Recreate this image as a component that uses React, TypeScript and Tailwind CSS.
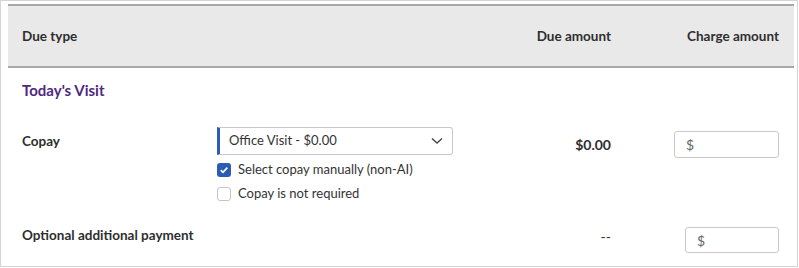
const font = { fontFamily: "Lato, 'Open Sans', sans-serif" };

const Chevron = () => (
  <svg width="12" height="8" viewBox="0 0 12 8" fill="none">
    <polyline points="1,1.5 6,6 11,1.5" stroke="#444" strokeWidth="1.4" />
  </svg>
);

const Check = () => (
  <svg width="10" height="10" viewBox="0 0 10 10" fill="none">
    <polyline points="1.8,5.2 4,7.3 8.3,2.6" stroke="#fff" strokeWidth="1.6" />
  </svg>
);

const Checkbox = ({ checked, label }: { checked?: boolean; label: string }) => (
  <div className="flex h-[20px] items-center">
    {checked ? (
      <span className="flex h-[14px] w-[14px] items-center justify-center rounded-[3px] bg-[#2b5bb3]">
        <Check />
      </span>
    ) : (
      <span className="h-[14px] w-[14px] rounded-[3px] border border-[#c4c4c4] bg-white" />
    )}
    <span className="ml-[7px] text-[13px] text-[#333]">{label}</span>
  </div>
);

const MoneyInput = ({ w, h }: { w: string; h: string }) => (
  <div className={`flex items-center rounded-[3px] border border-[#c9c9c9] bg-white pl-[11px] text-[14px] text-[#666] ${w} ${h}`}>
    $
  </div>
);

export default function App() {
  return (
    <div className="h-[268px] w-[799px] bg-white" style={font}>
      <div className="h-[267px] w-[798px] border border-[#d4d4d4] pl-[7px] pr-[3px] pt-[3px]">
        <div className="grid h-[64px] grid-cols-[195px_236px_158px_168px] items-center border-y-2 border-[#a8a8a8] bg-[#e9e9e9] px-[14px] text-[13.5px] font-bold text-[#2e2e2e]">
          <div>Due type</div>
          <div />
          <div className="text-right">Due amount</div>
          <div className="text-right">Charge amount</div>
        </div>

        <div className="px-[14px]">
          <div className="mt-[12px] text-[15px] leading-[20px] font-bold text-[#51287f]">Today's Visit</div>

          <div className="mt-[27px] grid grid-cols-[195px_236px_158px_168px] items-start">
            <div className="text-[13.5px] leading-[28px] font-bold text-[#2e2e2e]">Copay</div>
            <div>
              <div className="flex h-[28px] items-center justify-between rounded-r-[3px] border border-l-[3px] border-[#c9c9c9] border-l-[#2b5bb3] pl-[9px] pr-[9px] text-[13px] text-[#333]">
                <span>Office Visit - $0.00</span>
                <Chevron />
              </div>
              <div className="mt-[5px] flex flex-col gap-[4px]">
                <Checkbox checked label="Select copay manually (non-AI)" />
                <Checkbox label="Copay is not required" />
              </div>
            </div>
            <div className="mt-[8px] text-right text-[14px] leading-[20px] font-bold text-[#2e2e2e]">$0.00</div>
            <div className="mt-[4px] flex justify-end">
              <MoneyInput w="w-[105px]" h="h-[27px]" />
            </div>
          </div>

          <div className="mt-[23px] grid grid-cols-[195px_236px_158px_168px] items-start">
            <div className="whitespace-nowrap text-[13.5px] leading-[16px] font-bold text-[#2e2e2e]">Optional additional payment</div>
            <div />
            <div className="mt-[2px] text-right text-[14px] leading-[16px] text-[#333]">--</div>
            <div className="flex justify-end">
              <MoneyInput w="w-[94px]" h="h-[26px]" />
            </div>
          </div>
        </div>
      </div>
    </div>
  );
}
